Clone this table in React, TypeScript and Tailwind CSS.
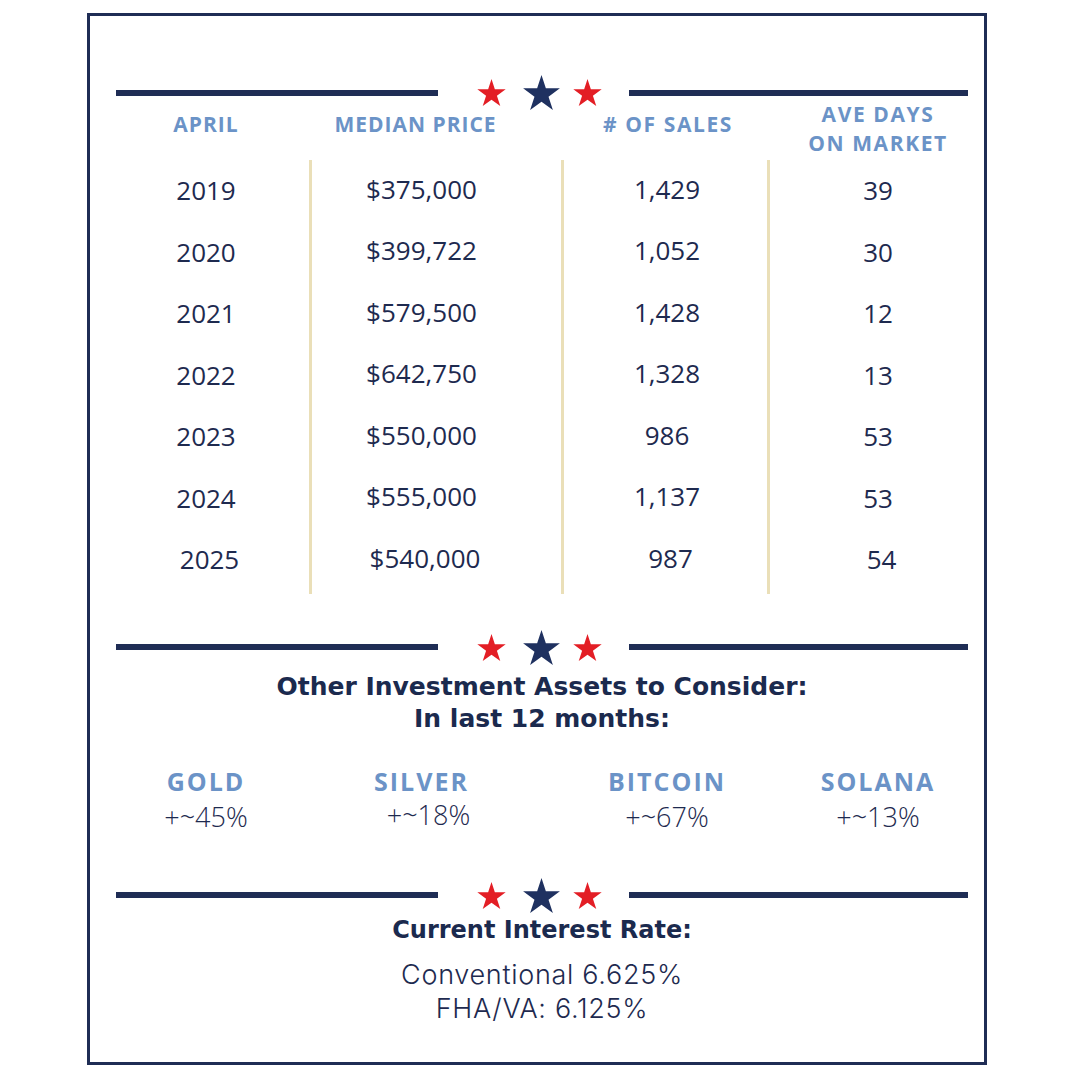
const years = [
  { year: '2019', price: '$375,000', sales: '1,429', days: '39' },
  { year: '2020', price: '$399,722', sales: '1,052', days: '30' },
  { year: '2021', price: '$579,500', sales: '1,428', days: '12' },
  { year: '2022', price: '$642,750', sales: '1,328', days: '13' },
  { year: '2023', price: '$550,000', sales: '986', days: '53' },
  { year: '2024', price: '$555,000', sales: '1,137', days: '53' },
  { year: '2025', price: '$540,000', sales: '987', days: '54' },
];

const assets = [
  { name: 'GOLD', change: '+~45%', shift: '' },
  { name: 'SILVER', change: '+~18%', shift: 'pl-[14px] -mt-[2px]' },
  { name: 'BITCOIN', change: '+~67%', shift: '' },
  { name: 'SOLANA', change: '+~13%', shift: '' },
];

function Star({ className }: { className: string }) {
  return (
    <svg viewBox="0 0 95.1 90.45" className={className}>
      <polygon points="47.55,0 58.78,34.55 95.1,34.55 65.71,55.9 76.94,90.45 47.55,69.1 18.16,90.45 29.39,55.9 0,34.55 36.32,34.55" />
    </svg>
  );
}

function Divider({ className = '' }: { className?: string }) {
  return (
    <div className={`flex items-center h-[35px] ${className}`}>
      <div className="w-[322px] h-[6px] bg-[#1f2d55]" />
      <Star className="ml-[39px] w-[29px] h-[27px] fill-[#e31e25]" />
      <Star className="ml-[17px] w-[37px] h-[35px] fill-[#1f3160]" />
      <Star className="ml-[13px] w-[29px] h-[27px] fill-[#e31e25]" />
      <div className="ml-[27px] flex-1 h-[6px] bg-[#1f2d55]" />
    </div>
  );
}

// shared column geometry: gold rules at 309 / 561 / 767
const cols = 'grid grid-cols-[193px_252px_206px_201px]';
const c1 = 'pr-[13px] text-center';
const c2 = 'border-l-[3px] pr-[30px] text-center';
const c3 = 'border-l-[3px] pl-[3px] text-center';
const c4 = 'border-l-[3px] pl-[18px] text-center';

// the last row sits a little to the right in the original
const nudge = (i: number) => (i === years.length - 1 ? 'pl-[7px]' : '');

export default function App() {
  return (
    <div className="w-[1080px] h-[1080px] bg-white pl-[87px] pt-[13px]">
      <div className="w-[900px] h-[1052px] border-[3px] border-[#1f2d55] pl-[26px] pr-[16px] pt-[59px]">
        <Divider />

        {/* table header */}
        <div className={`${cols} -mt-[10px] font-['Open_Sans',sans-serif] font-bold text-[21px] tracking-[1px] text-[#6b93c7] leading-[29px]`}>
          <div className={`${c1} pt-[10px]`}>APRIL</div>
          <div className="border-l-[3px] border-transparent pr-[42px] text-center pt-[10px]">MEDIAN PRICE</div>
          <div className={`${c3} border-transparent pt-[10px] tracking-[1.6px]`}>
            <span className="pl-[2px]"># OF SALES</span>
          </div>
          <div className={`${c4} border-transparent tracking-[1.6px]`}>
            AVE DAYS
            <br />
            ON MARKET
          </div>
        </div>

        {/* table body */}
        <div className={`${cols} mt-[2px] font-['Open_Sans',sans-serif] text-[26px] text-[#1e2a4f]`}>
          <div className={`${c1} pb-[3px]`}>
            {years.map((r, i) => (
              <div key={r.year} className={`h-[61.5px] flex items-center justify-center ${nudge(i)}`}>
                {r.year}
              </div>
            ))}
          </div>
          <div className={`${c2} border-[#eadfb8] pb-[3px]`}>
            {years.map((r, i) => (
              <div key={r.year} className={`h-[61.5px] flex items-center justify-center pb-[3px] ${nudge(i)}`}>
                {r.price}
              </div>
            ))}
          </div>
          <div className={`${c3} border-[#eadfb8] pb-[3px]`}>
            {years.map((r, i) => (
              <div key={r.year} className={`h-[61.5px] flex items-center justify-center pb-[3px] ${nudge(i)}`}>
                {r.sales}
              </div>
            ))}
          </div>
          <div className={`${c4} border-[#eadfb8] pb-[3px]`}>
            {years.map((r, i) => (
              <div key={r.year} className={`h-[61.5px] flex items-center justify-center ${nudge(i)}`}>
                {r.days}
              </div>
            ))}
          </div>
        </div>

        <Divider className="mt-[36px]" />

        <div className="mt-[6px] text-center font-['DejaVu_Sans',sans-serif] font-bold text-[25px] leading-[32px] text-[#1b2a4e]">
          Other Investment Assets to Consider:
          <br />
          In last 12 months:
        </div>

        {/* assets */}
        <div className={`${cols} mt-[29px] leading-[35px]`}>
          {assets.map((a, i) => (
            <div key={a.name} className={`${[c1, c2, c3, c4][i]} border-transparent`}>
              <div className="font-['Open_Sans',sans-serif] font-bold text-[25px] tracking-[2px] text-[#6b93c7]">
                {a.name}
              </div>
              <div className={`font-['Open_Sans',sans-serif] font-light text-[27px] text-[#1e2a4f] ${a.shift}`}>
                {a.change}
              </div>
            </div>
          ))}
        </div>

        <Divider className="mt-[44px]" />

        <div className="mt-[1px] text-center font-['DejaVu_Sans',sans-serif] font-bold text-[24px] leading-[32px] text-[#1b2a4e]">
          Current Interest Rate:
        </div>
        <div className="mt-[12px] text-center font-['Inter',sans-serif] font-light text-[27px] tracking-[0.7px] leading-[34px] text-[#1e2a4f]">
          Conventional 6.625%
          <br />
          FHA/VA: 6.125%
        </div>
      </div>
    </div>
  );
}
